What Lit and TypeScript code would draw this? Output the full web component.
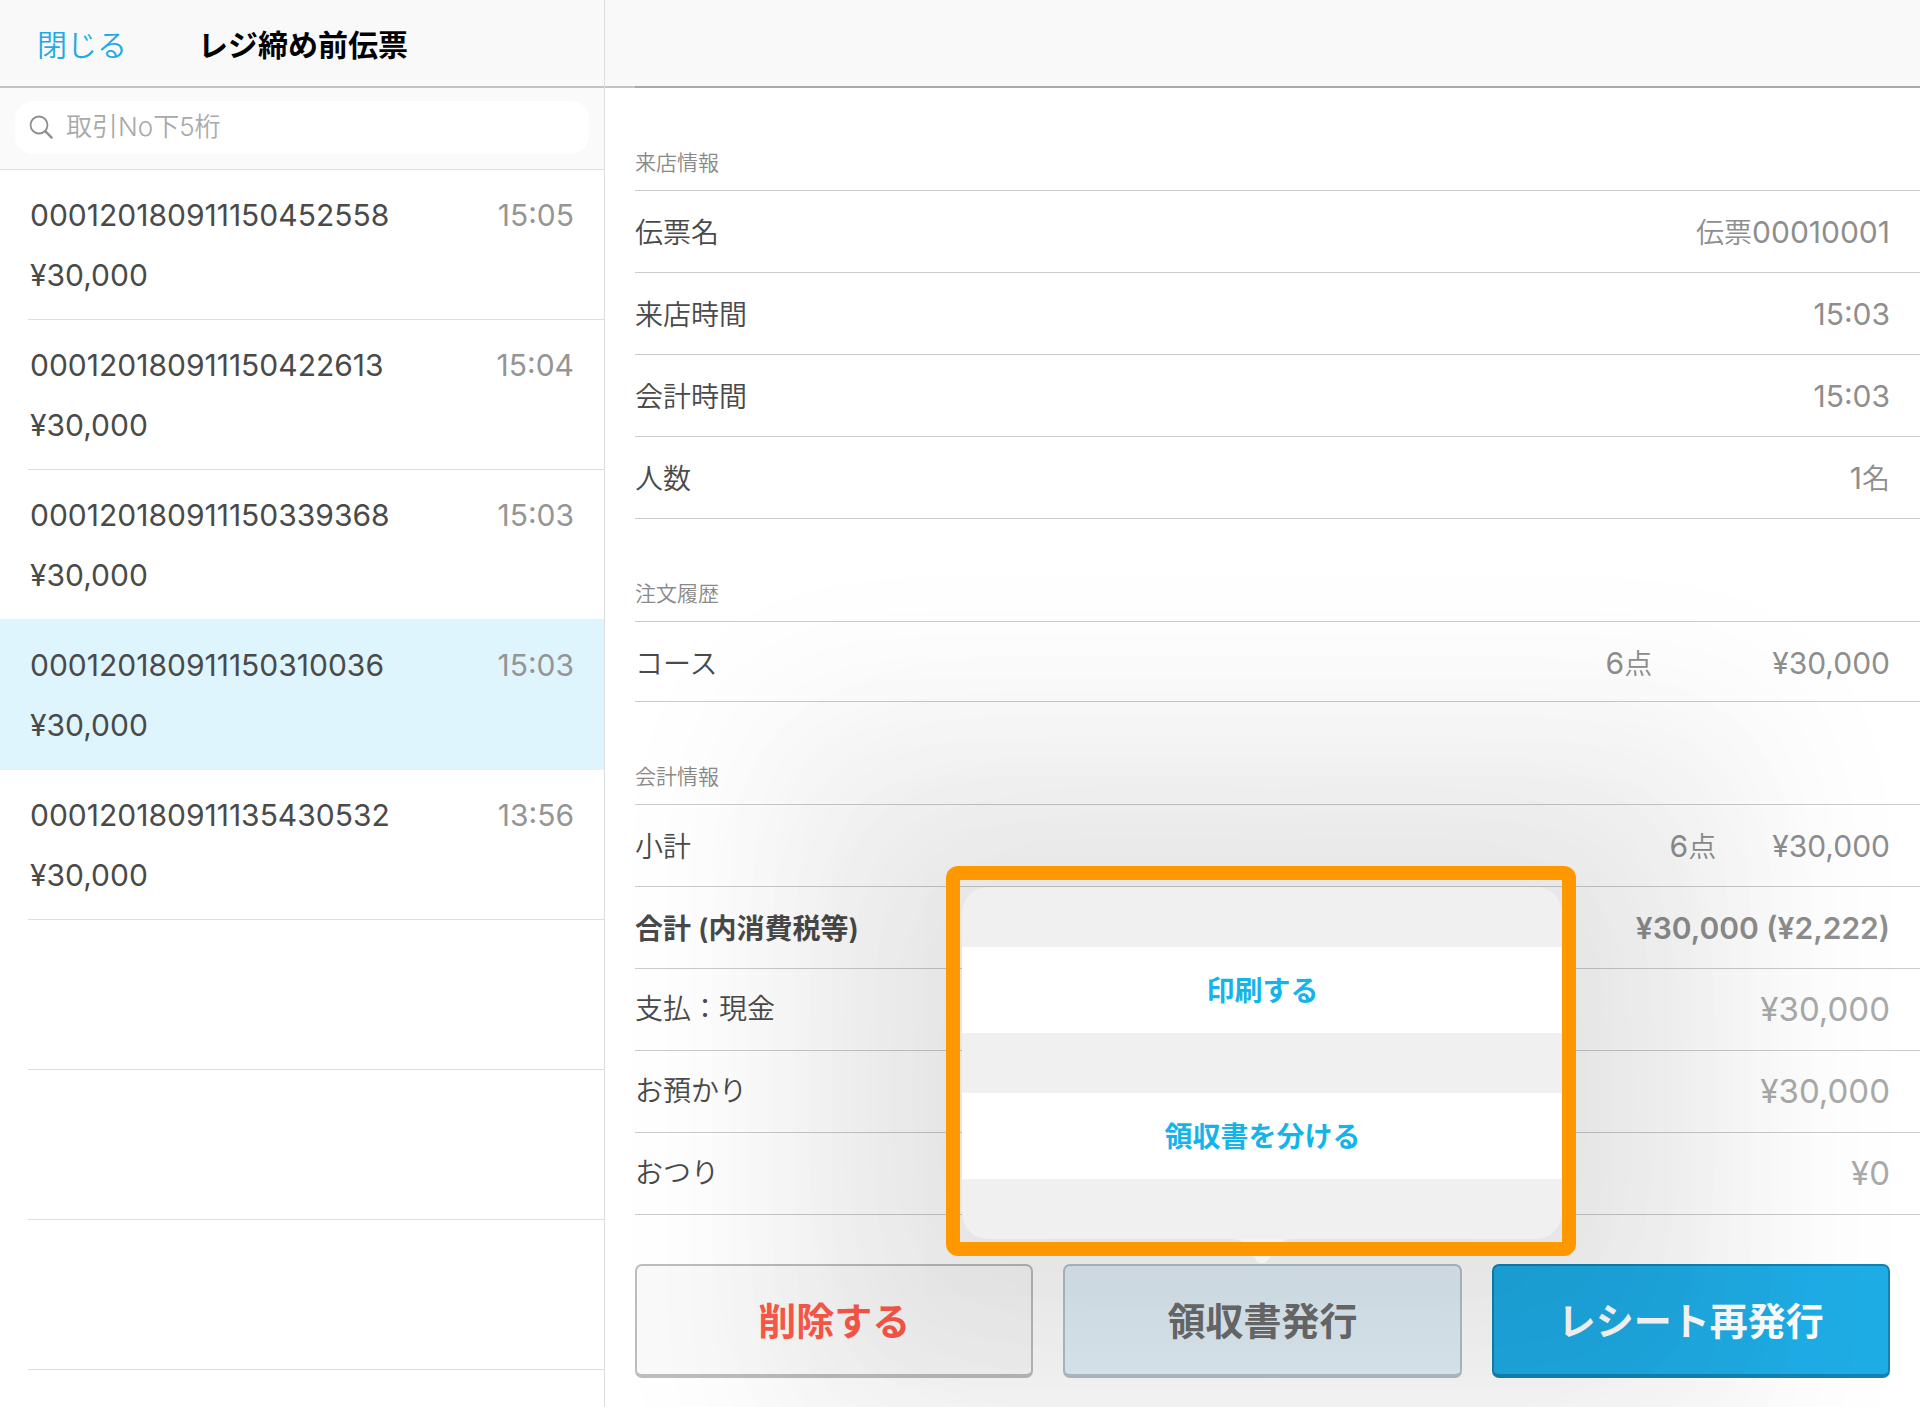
import { LitElement, html, css, svg, nothing } from "lit";
import { customElement, property, state } from "lit/decorators.js";
import { classMap } from "lit/directives/class-map.js";

interface Slip {
  no: string;
  time: string;
  amount: string;
}

interface DetailRow {
  label: string;
  value: string;
  count?: string;
  kind?: "order" | "total" | "payment";
}

interface Section {
  title: string;
  rows: DetailRow[];
}

const SLIPS: Slip[] = [
  { no: "000120180911150452558", time: "15:05", amount: "¥30,000" },
  { no: "000120180911150422613", time: "15:04", amount: "¥30,000" },
  { no: "000120180911150339368", time: "15:03", amount: "¥30,000" },
  { no: "000120180911150310036", time: "15:03", amount: "¥30,000" },
  { no: "000120180911135430532", time: "13:56", amount: "¥30,000" },
];

const SECTIONS: Section[] = [
  {
    title: "来店情報",
    rows: [
      { label: "伝票名", value: "伝票00010001" },
      { label: "来店時間", value: "15:03" },
      { label: "会計時間", value: "15:03" },
      { label: "人数", value: "1名" },
    ],
  },
  {
    title: "注文履歴",
    rows: [{ label: "コース", value: "¥30,000", count: "6点", kind: "order" }],
  },
  {
    title: "会計情報",
    rows: [
      { label: "小計", value: "¥30,000", count: "6点" },
      { label: "合計 (内消費税等)", value: "¥30,000 (¥2,222)", kind: "total" },
      { label: "支払：現金", value: "¥30,000", kind: "payment" },
      { label: "お預かり", value: "¥30,000", kind: "payment" },
      { label: "おつり", value: "¥0", kind: "payment" },
    ],
  },
];

/** Sets the kanji of a value in the label size, next to the larger digits. */
const mixed = (text: string) =>
  text
    .split(/([一-龠]+)/)
    .filter(Boolean)
    .map((part) => (/[一-龠]/.test(part) ? html`<span class="kanji">${part}</span>` : part));

const searchIcon = svg`
  <svg viewBox="0 0 24 24" width="24" height="24" fill="none" stroke="#8e8e93" aria-hidden="true">
    <circle cx="10" cy="10" r="8.5" stroke-width="1.8" />
    <path d="M16.2 16.2 L22.6 22.6" stroke-width="2.4" stroke-linecap="round" />
  </svg>`;

@customElement("slip-list")
export class SlipList extends LitElement {
  @property({ attribute: false }) slips: Slip[] = [];
  @property({ type: Number }) blanks = 0;
  @state() private selected = 3;

  static styles = css`
    :host {
      display: flex;
      flex-direction: column;
    }
    .bar {
      box-sizing: border-box;
      display: flex;
      align-items: center;
      gap: 71px;
      height: 88px;
      padding: 0 38px 0 37px;
      background: #f9f9f9;
      border-bottom: 2px solid #c4c4c4;
    }
    .close {
      padding: 0;
      border: 0;
      background: none;
      font: inherit;
      font-size: 30px;
      font-weight: 350;
      color: #1eaae4;
    }
    .title {
      margin: 0;
      font-size: 30px;
      font-weight: 700;
      color: #000;
    }
    .search {
      box-sizing: border-box;
      display: flex;
      height: 82px;
      padding: 13px 15px 15px;
      background: #fafafa;
      border-bottom: 1px solid #dedede;
    }
    .field {
      flex: 1;
      display: flex;
      align-items: center;
      gap: 13px;
      padding: 0 14px 2px;
      border-radius: 18px;
      background: #fff;
    }
    .field svg {
      flex: none;
    }
    .input {
      flex: 1;
      min-width: 0;
      padding: 0;
      border: 0;
      outline: 0;
      background: none;
      font: inherit;
      font-size: 26px;
      font-weight: 350;
      color: #4a4a4a;
    }
    .input::placeholder {
      color: #a9a9a9;
      opacity: 1;
    }
    .list {
      flex: 1;
      margin: 0;
      padding: 0;
      list-style: none;
    }
    .item {
      height: 150px;
      padding-left: 28px;
    }
    .item.on {
      background: #def5fe;
      box-shadow: 0 -1px #def5fe;
    }
    .slip {
      box-sizing: border-box;
      display: grid;
      grid-template-columns: 1fr auto;
      align-content: start;
      width: 100%;
      height: 100%;
      padding: 15px 30px 0 2px;
      border: 0;
      border-bottom: 1px solid #dedede;
      background: none;
      font: inherit;
      font-size: 30px;
      line-height: 60px;
      text-align: left;
      color: #4a4a4a;
    }
    .on .slip,
    .item:has(+ .on) .slip {
      border-bottom-color: transparent;
    }
    .time {
      color: #959595;
    }
  `;

  render() {
    return html`
      <header class="bar">
        <button class="close" type="button">閉じる</button>
        <h1 class="title">レジ締め前伝票</h1>
      </header>
      <div class="search">
        <label class="field">
          ${searchIcon}
          <input class="input" type="search" placeholder="取引No下5桁" aria-label="取引No下5桁" />
        </label>
      </div>
      <ul class="list">
        ${this.slips.map(
          (s, i) => html`
            <li class=${classMap({ item: true, on: i === this.selected })}>
              <button class="slip" type="button" @click=${() => (this.selected = i)}>
                <span>${s.no}</span><span class="time">${s.time}</span>
                <span>${s.amount}</span>
              </button>
            </li>
          `
        )}
        ${Array.from(
          { length: this.blanks },
          () => html`<li class="item" aria-hidden="true"><div class="slip"></div></li>`
        )}
      </ul>
    `;
  }
}

@customElement("receipt-popover")
export class ReceiptPopover extends LitElement {
  static styles = css`
    :host {
      display: block;
      position: relative;
      width: 600px;
    }
    .panel {
      display: flex;
      flex-direction: column;
      gap: 60px;
      padding: 60px 0;
      border-radius: 26px;
      background: #f0f0f0;
      box-shadow:
        0 20px 160px 60px rgba(0, 0, 0, 0.035),
        0 20px 160px 150px rgba(0, 0, 0, 0.04),
        0 20px 160px 230px rgba(0, 0, 0, 0.04);
    }
    .action {
      height: 86px;
      padding: 0 0 3px;
      border: 0;
      background: #fff;
      font: inherit;
      font-size: 28px;
      font-weight: 700;
      color: #14b4ea;
    }
    .arrow {
      position: absolute;
      top: 100%;
      left: 50%;
      margin-left: -30px;
      display: block;
    }
    .frame {
      position: absolute;
      inset: -21px -14px -17px -16px;
      border-radius: 12px;
      overflow: hidden;
      pointer-events: none;
    }
    .edge {
      box-sizing: border-box;
      height: 100%;
      border: 14px solid #ff9800;
    }
  `;

  render() {
    return html`
      <div class="panel" role="menu">
        <button class="action" type="button" role="menuitem">印刷する</button>
        <button class="action" type="button" role="menuitem">領収書を分ける</button>
      </div>
      <svg class="arrow" width="60" height="25" viewBox="0 0 60 25" aria-hidden="true">
        <path d="M0 0 C8 0 11 3 14 8 L24 21 Q30 28 36 21 L46 8 C49 3 52 0 60 0 Z" fill="#f3f3f3" />
      </svg>
      <div class="frame"><div class="edge"></div></div>
    `;
  }
}

@customElement("slip-detail")
export class SlipDetail extends LitElement {
  @property({ attribute: false }) sections: Section[] = [];

  static styles = css`
    :host {
      display: flex;
      flex-direction: column;
    }
    .bar {
      height: 86px;
      background: #f9f9f9;
    }
    .rule {
      height: 2px;
      background: linear-gradient(90deg, #c4c4c4 30px, #a9a9a9 30px);
    }
    .body {
      flex: 1;
      padding-left: 30px;
    }
    .heading {
      box-sizing: border-box;
      display: flex;
      align-items: flex-end;
      height: 103px;
      margin: 0;
      padding-bottom: 12px;
      border-bottom: 1px solid #cccccf;
      font-size: 21px;
      line-height: 30px;
      font-weight: 350;
      color: #8a8a8a;
    }
    .rows {
      margin: 0;
    }
    .row {
      box-sizing: border-box;
      display: flex;
      align-items: baseline;
      height: 82px;
      padding-right: 30px;
      border-bottom: 1px solid #cccccf;
      font-size: 28px;
      line-height: 82px;
      color: #4a4a4a;
    }
    .label {
      flex: 1;
      font-weight: 350;
    }
    .count,
    .value {
      margin: 0;
      color: #8e8e8e;
      font-size: 30px;
    }
    .kanji {
      font-size: 28px;
      font-weight: 350;
    }
    .count {
      margin-right: 56px;
    }
    .order {
      height: 80px;
    }
    .order .count {
      margin-right: 120px;
    }
    .total .label,
    .total .value {
      font-weight: 600;
    }
    .payment {
      align-items: flex-start;
      line-height: 80px;
    }
    .payment .value {
      font-size: 33px;
      color: #aaa;
    }
    .actions {
      display: grid;
      grid-template-columns: repeat(3, 1fr);
      gap: 30px;
      padding: 49px 30px 29px 0;
    }
    .slot {
      position: relative;
      display: grid;
    }
    .button {
      box-sizing: border-box;
      height: 114px;
      padding: 0 0 3px;
      border: 2px solid #bdbdbd;
      border-bottom-width: 4px;
      border-radius: 7px;
      background: #fafafa;
      font: inherit;
      font-size: 38px;
      font-weight: 700;
    }
    .delete {
      color: #ff5a4a;
    }
    .issue {
      border-color: #b4c2cc;
      background: #e3f1f9;
      color: #6e6e6e;
    }
    .reissue {
      border-color: #1483b3;
      background: #1fade6;
      color: #fff;
    }
    .popover {
      position: absolute;
      left: 50%;
      bottom: 100%;
      margin: 0 0 25px -300px;
      z-index: 1;
    }
  `;

  render() {
    return html`
      <header class="bar"></header>
      <div class="rule"></div>
      <div class="body">
        ${this.sections.map(
          (s) => html`
            <section>
              <h2 class="heading">${s.title}</h2>
              <dl class="rows">
                ${s.rows.map(
                  (r) => html`
                    <div class="row ${r.kind ?? ""}">
                      <dt class="label">${r.label}</dt>
                      ${r.count ? html`<dd class="count">${mixed(r.count)}</dd>` : nothing}
                      <dd class="value">${mixed(r.value)}</dd>
                    </div>
                  `
                )}
              </dl>
            </section>
          `
        )}
        <div class="actions">
          <button class="button delete" type="button">削除する</button>
          <div class="slot">
            <button class="button issue" type="button" aria-haspopup="menu">領収書発行</button>
            <receipt-popover class="popover"></receipt-popover>
          </div>
          <button class="button reissue" type="button">レシート再発行</button>
        </div>
      </div>
    `;
  }
}

@customElement("app-root")
export class AppRoot extends LitElement {
  static styles = css`
    :host {
      display: flex;
      min-height: 100vh;
      overflow: hidden;
      background: #fff;
      font-family: Inter, "Noto Sans CJK JP", sans-serif;
    }
    .side {
      flex: 0 0 604px;
      border-right: 1px solid #dedede;
    }
    .main {
      flex: 1;
      min-width: 0;
    }
  `;

  render() {
    return html`
      <slip-list class="side" .slips=${SLIPS} .blanks=${3}></slip-list>
      <slip-detail class="main" .sections=${SECTIONS}></slip-detail>
    `;
  }
}
